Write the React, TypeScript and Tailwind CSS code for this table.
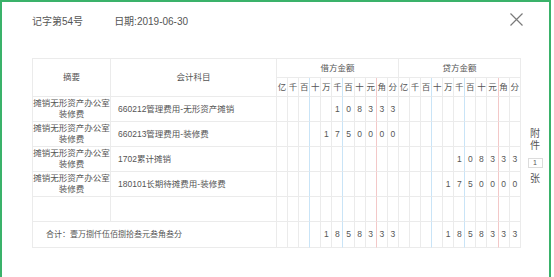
import React from 'react';

const UNITS = ['亿', '千', '百', '十', '万', '千', '百', '十', '元', '角', '分'];

type Entry = {
  summary: string;
  account: string;
  debit?: string;
  credit?: string;
};

const entries: Entry[] = [
  { summary: '摊销无形资产办公室装修费', account: '660212管理费用-无形资产摊销', debit: '108333' },
  { summary: '摊销无形资产办公室装修费', account: '660213管理费用-装修费', debit: '1750000' },
  { summary: '摊销无形资产办公室装修费', account: '1702累计摊销', credit: '108333' },
  { summary: '摊销无形资产办公室装修费', account: '180101长期待摊费用-装修费', credit: '1750000' },
];

// right-hand border colour for the amount grid columns
const lineColor = (i: number) => {
  if (i === 2 || i === 5) return 'border-r-[#c9e4f7]';
  if (i === 8) return 'border-r-[#f3c8c8]';
  return 'border-r-[#ebebeb]';
};

const AmountCells = ({ value }: { value?: string }) => {
  const digits = value ? value.padStart(11, ' ').split('') : Array(11).fill(' ');
  return (
    <>
      {digits.map((d, i) => (
        <td
          key={i}
          className={`border-r border-b border-b-[#ebebeb] ${lineColor(i)} text-center text-[8.5px] text-[#555]`}
        >
          {d.trim()}
        </td>
      ))}
    </>
  );
};

const CloseIcon = () => (
  <svg width="13" height="13" viewBox="0 0 13 13" fill="none">
    <path d="M0.5 0.5L12.5 12.5M12.5 0.5L0.5 12.5" stroke="#7a7a7a" strokeWidth="1.2" />
  </svg>
);

export default function App() {
  return (
    <div
      className="relative w-[551px] h-[277px] border-2 border-b-0 border-[#3ab26a] bg-white pl-[30px] pt-[13px] text-[#444]"
      style={{ fontFamily: '"Liberation Sans", "Noto Sans CJK SC", sans-serif' }}
    >
      <button className="absolute right-[26px] top-[11px]">
        <CloseIcon />
      </button>

      <div className="flex items-center h-[14px] text-[10px] leading-[14px] text-[#555]">
        <span>记字第54号</span>
        <span className="ml-[31px]">日期:2019-06-30</span>
      </div>

      <div className="flex items-center mt-[29px]">
        <table
          className="w-[489px] table-fixed border-separate border-spacing-0 border-l border-t border-[#ebebeb] text-[8.5px] text-[#555]"
        >
          <colgroup>
            <col className="w-[78px]" />
            <col className="w-[166px]" />
          </colgroup>
          <thead>
            <tr className="h-[19px]">
              <th rowSpan={2} className="border-r border-b border-[#ebebeb] font-normal">
                摘要
              </th>
              <th rowSpan={2} className="border-r border-b border-[#ebebeb] font-normal">
                会计科目
              </th>
              <th colSpan={11} className="border-r border-b border-[#ebebeb] font-normal">
                借方金额
              </th>
              <th colSpan={11} className="border-r border-b border-[#ebebeb] font-normal">
                贷方金额
              </th>
            </tr>
            <tr className="h-[19px]">
              {[...UNITS, ...UNITS].map((u, i) => (
                <th
                  key={i}
                  className={`border-r border-b border-b-[#ebebeb] ${lineColor(i % 11)} font-normal text-[8.5px] p-0`}
                >
                  {u}
                </th>
              ))}
            </tr>
          </thead>
          <tbody>
            {entries.map((e, idx) => (
              <tr key={idx} className="h-[25px]">
                <td className="border-r border-b border-[#ebebeb] text-center leading-[11px] px-0">
                  {e.summary}
                </td>
                <td className="border-r border-b border-[#ebebeb] pl-[7px] whitespace-nowrap">
                  {e.account}
                </td>
                <AmountCells value={e.debit} />
                <AmountCells value={e.credit} />
              </tr>
            ))}
            <tr className="h-[25px]">
              <td className="border-r border-b border-[#ebebeb]" />
              <td className="border-r border-b border-[#ebebeb]" />
              <AmountCells />
              <AmountCells />
            </tr>
            <tr className="h-[26px]">
              <td colSpan={2} className="border-r border-b border-[#ebebeb] pl-[13px] text-[8px]">
                合计：壹万捌仟伍佰捌拾叁元叁角叁分
              </td>
              <AmountCells value="1858333" />
              <AmountCells value="1858333" />
            </tr>
          </tbody>
        </table>

        <div className="w-[28px] pt-[7px] flex flex-col items-center text-[10px] leading-[12px] text-[#555]">
          <span>附</span>
          <span>件</span>
          <span className="mt-[6px] mb-[5px] w-[15px] h-[10px] border border-[#dcdcdc] text-[7px] leading-[8px] text-center">
            1
          </span>
          <span>张</span>
        </div>
      </div>
    </div>
  );
}
